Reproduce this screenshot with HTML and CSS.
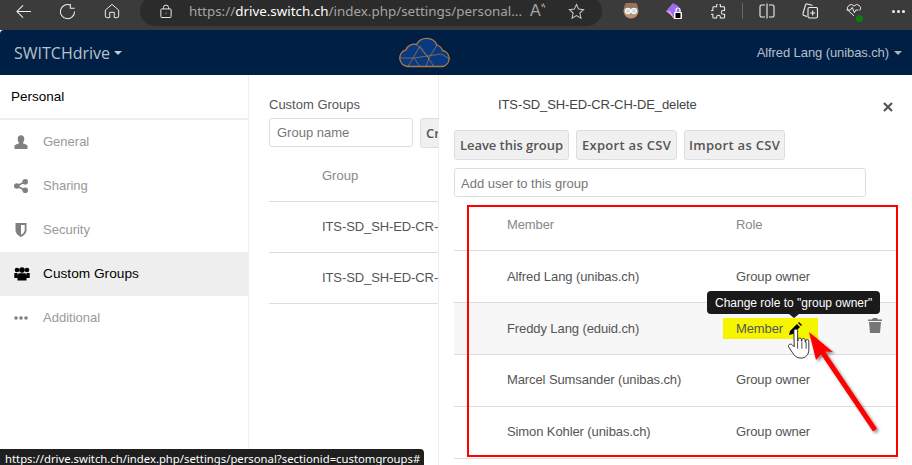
FILE: index.html
```html
<!DOCTYPE html>
<html lang="en">
<head>
<meta charset="utf-8">
<title>SWITCHdrive</title>
<link rel="stylesheet" href="styles.css">
</head>
<body>
<div class="browser">
  <svg class="bi bi-back" viewBox="0 0 18 16"><path d="M17 8H2M8.500 1.500 2 8l6.500 6.500"/></svg>
  <svg class="bi bi-reload" viewBox="0 0 18 18"><path d="M12 2.200A7.500 7.500 0 1 0 16.500 9M12 1v4.500h4.500" /></svg>
  <svg class="bi bi-home" viewBox="0 0 18 18"><path d="M1.500 8 9 1.500 16.500 8v6.500a2 2 0 0 1-2 2h-3v-6h-5v6h-3a2 2 0 0 1-2-2z"/></svg>
  <div class="addr">
    <svg class="bi bi-lock" viewBox="0 0 14 16"><path d="M4 5V3.500a3 3 0 0 1 6 0V5M2 5h10a1 1 0 0 1 1 1v8a1 1 0 0 1-1 1H2a1 1 0 0 1-1-1V6a1 1 0 0 1 1-1zM7 9.500v1"/></svg>
    <span class="url">https://<b>drive.switch.ch</b>/index.php/settings/personal...</span>
    <span class="aa">A</span>
    <svg class="bi bi-waves" viewBox="0 0 5 8"><path d="M.5 1.500 2 4M2 .5 4 4.500"/></svg>
    <svg class="bi bi-star" viewBox="0 0 18 18"><path d="m9 1.500 2.300 5 5.200.6-3.900 3.500 1.100 5.400L9 13.300 4.300 16l1.100-5.400L1.500 7.100l5.200-.6z"/></svg>
  </div>
  <div class="exts">
    <svg class="ext ext-face" viewBox="0 0 16 16"><circle cx="8" cy="8" r="7.500" fill="#c09070"/><path d="M1 5a7 7 0 0 1 14 0z" fill="#9a7458"/><circle cx="5" cy="8" r="2.800" fill="#c5e3ea" stroke="#fff"/><circle cx="11" cy="8" r="2.800" fill="#c5e3ea" stroke="#fff"/></svg>
    <svg class="ext ext-lock" viewBox="0 0 17 17"><path d="M0 8 7 0l5 3 3 5-6 8z" fill="#9a6cf0"/><path d="M0 8l4 3 4 5 1 0-5-8z" fill="#f0a0c8"/><rect x="8" y="9" width="8" height="7" rx="1" fill="#fff"/><rect x="9.500" y="10" width="5" height="5" fill="#000"/><path d="M10 9V7a2 2 0 0 1 4 0v2" fill="none" stroke="#fff" stroke-width="1.200"/></svg>
    <svg class="bi ext-puzzle" viewBox="0 0 16 16"><path d="M6 1.500a2 2 0 0 1 4 0V3h3.500a1 1 0 0 1 1 1v3H13a2 2 0 0 0 0 4h1.500v3a1 1 0 0 1-1 1H10v-1a2 2 0 0 0-4 0v1H3a1 1 0 0 1-1-1v-3H1a2 2 0 0 1 0-4h1V4a1 1 0 0 1 1-1h3z"/></svg>
    <span class="sep"></span>
    <svg class="bi ext-split" viewBox="0 0 16 16"><path d="M6 2H2.500a1.500 1.500 0 0 0-1.500 1.500v9A1.500 1.500 0 0 0 2.500 14H6M10 2h3.500A1.500 1.500 0 0 1 15 3.500v9a1.500 1.500 0 0 1-1.500 1.500H10M8 .5v15"/></svg>
    <svg class="bi ext-coll" viewBox="0 0 16 16"><path d="M5 13.500 2 12.500a1.500 1.500 0 0 1-1-2L3.500 2a1.500 1.500 0 0 1 2-1l5 1.500"/><rect x="6" y="4.500" width="9.500" height="10.500" rx="1.500"/><path d="M10.700 7.500v5M8.200 10h5"/></svg>
    <span class="ext-wrap">
      <svg class="bi ext-heart" viewBox="0 0 18 16"><path d="M9 14 2.500 8A3.800 3.800 0 0 1 9 3a3.800 3.800 0 0 1 6.500 5M.5 7.500h4.500L7 4.500l2.500 6 1.500-3h3"/></svg>
      <span class="green-dot"></span>
    </span>
    <span class="more"><i></i><i></i><i></i></span>
  </div>
</div>

<header class="nav">
  <div class="brand">SWITCHdrive<span class="caret"></span></div>
  <svg class="logo" viewBox="0 0 54 32">
    <path d="M10 30.500a8.500 8.500 0 0 1-2-16.700 9 9 0 0 1 10.500-5.300A11.500 11.500 0 0 1 39 9a8.500 8.500 0 0 1 5.500 5.500A8.200 8.200 0 0 1 45 30.500z" fill="#073a80" stroke="#b07a45" stroke-width="1.300"/>
    <path d="M10 30.500 22 10l14 20.500M18.500 8.500 31 22l8-13M2 22h14l27-4 9 5M16 22l6 8.500M31 22l-3 8.500" fill="none" stroke="#b07a45" stroke-width=".7"/>
  </svg>
  <div class="user">Alfred Lang (unibas.ch)<span class="caret small"></span></div>
</header>

<main class="main">
  <nav class="side">
    <div class="side-title">Personal</div>
    <a class="side-item" href="#"><svg class="si" viewBox="0 0 14 14"><path d="M7 .2c2 0 3.300 1.500 3.300 3.600S9.500 7 8.900 8c0 1 3.300 1 4.600 2.600V14H.5v-3.400C1.800 9 5.100 9 5.100 8 4.500 7 3.700 6 3.700 3.800S5 .2 7 .2z"/></svg>General</a>
    <a class="side-item" href="#"><svg class="si" viewBox="0 0 14 14"><circle cx="2.800" cy="7" r="2.800"/><circle cx="11.200" cy="2.800" r="2.800"/><circle cx="11.200" cy="11.200" r="2.800"/><path d="m2.800 7 8.400-4.200M2.800 7l8.400 4.200" stroke="#808080" stroke-width="1.800"/></svg>Sharing</a>
    <a class="side-item" href="#"><svg class="si" viewBox="0 0 14 14"><path fill-rule="evenodd" d="M1.500 0h11v7c0 3.500-2.500 5.500-5.500 7-3-1.500-5.500-3.500-5.500-7zM7 2v9.800c1.700-1 3.700-2.500 3.700-4.800V2z"/></svg>Security</a>
    <a class="side-item active" href="#"><svg class="si" viewBox="0 0 16 14"><circle cx="3" cy="3" r="2.300"/><circle cx="13" cy="3" r="2.300"/><circle cx="8" cy="3" r="2.800"/><path d="M.3 6h3l1 5H.3zM12.700 6h3v5h-4z"/><path d="M5 6.300h6c1 0 1.500 1 1.500 2V13.500h-9V8.300c0-1 .5-2 1.500-2z"/></svg>Custom Groups</a>
    <a class="side-item" href="#"><svg class="si" viewBox="0 0 14 14"><circle cx="2" cy="7" r="1.800"/><circle cx="7" cy="7" r="1.800"/><circle cx="12" cy="7" r="1.800"/></svg>Additional</a>
  </nav>

  <section class="content">
    <div class="content-title">Custom Groups</div>
    <div class="create">
      <div class="field group-name">Group name</div>
      <div class="btn create-btn">Create</div>
    </div>
    <div class="gt-head">Group</div>
    <div class="gt-row">ITS-SD_SH-ED-CR-CH-DE_delete</div>
    <div class="gt-row">ITS-SD_SH-ED-CR-CH-DE_test</div>
  </section>

  <aside class="panel">
    <div class="panel-top">
      <div class="panel-title">ITS-SD_SH-ED-CR-CH-DE_delete</div>
      <svg class="close" viewBox="0 0 10 10"><path d="m1 1 8 8M9 1 1 9"/></svg>
    </div>
    <div class="actions">
      <div class="btn leave">Leave this group</div>
      <div class="btn csv">Export as CSV</div>
      <div class="btn csv">Import as CSV</div>
    </div>
    <div class="field add-user">Add user to this group</div>
    <div class="members">
      <div class="m-row m-head"><span class="m-name">Member</span><span class="m-role">Role</span></div>
      <div class="m-row"><span class="m-name">Alfred Lang (unibas.ch)</span><span class="m-role">Group owner</span></div>
      <div class="m-row hover"><span class="m-name">Freddy Lang (eduid.ch)</span>
        <span class="m-role">
          <span class="marked">Member
            <svg class="pencil" viewBox="0 0 14 14"><path d="M1 13l1-4 7-7 3 3-7 7z"/><path d="m10 1 1-1 3 3-1 1z"/></svg>
          </span>
          <span class="tip">Change role to "group owner"</span>
        </span>
        <svg class="trash" viewBox="0 0 14 15"><path d="M5 0h4l1 1.500h4V3H0V1.500h4zM1 4h12l-1 11H2z"/></svg>
      </div>
      <div class="m-row lifted"><span class="m-name">Marcel Sumsander (unibas.ch)</span><span class="m-role">Group owner</span></div>
      <div class="m-row lifted"><span class="m-name">Simon Kohler (unibas.ch)</span><span class="m-role">Group owner</span></div>
    </div>
  </aside>
</main>

<div class="redbox"></div>
<svg class="arrow" viewBox="0 0 80 110">
  <defs><filter id="sh" x="-20%" y="-20%" width="150%" height="150%"><feDropShadow dx="2" dy="2" stdDeviation="1.500" flood-color="#000" flood-opacity=".45"/></filter></defs>
  <path filter="url(#sh)" fill="#fd0000" d="M0 0 24 20 16 19.600 68 96.600 64 99.400 12 22.400 7 28z"/>
</svg>
<svg class="hand" viewBox="0 0 26 34">
  <path d="M7 3a2 2 0 0 1 4 0v11h.500v-2a1.800 1.800 0 0 1 3.500 0v2h.500v-1.500a1.800 1.800 0 0 1 3.500 0V15h.500v-1a1.700 1.700 0 0 1 3.400 0v9c0 5-3 9-8.500 9-5 0-7-3-9-6l-4-6c-1-2 2-4 4-2l2 2z" fill="#fff" stroke="#111" stroke-width=".9"/>
  <path d="M11 15v7M15.500 15v7M20 15v7" stroke="#111" stroke-width=".8"/>
</svg>
<div class="status">https://drive.switch.ch/index.php/settings/personal?sectionid=customgroups#</div>
</body>
</html>
```

FILE: styles.css
```css
* { box-sizing: border-box; }
html, body { margin: 0; padding: 0; }
body {
  position: relative;
  width: 912px;
  height: 465px;
  overflow: hidden;
  display: flex;
  flex-direction: column;
  background: #fff;
  font-family: "Open Sans", "Liberation Sans", Arial, sans-serif;
  font-size: 13px;
  color: #555;
}

/* Browser chrome */
.browser {
  flex: 0 0 30px;
  height: 30px;
  display: flex;
  align-items: center;
  background: #3b3b3b;
  padding: 0 0 8px 15px;
  overflow: hidden;
}
.bi { fill: none; stroke: #f0f0f0; stroke-width: 1.100; flex: none; }
.bi-back { width: 17px; height: 15px; }
.bi-reload { width: 17px; height: 17px; margin-left: 27px; }
.bi-home { width: 16px; height: 16px; margin-left: 28px; }
.addr {
  margin-left: 20px;
  width: 462px;
  height: 30px;
  background: #2b2b2b;
  border-radius: 15px;
  display: flex;
  align-items: center;
  padding-left: 20px;
  flex: none;
  overflow: hidden;
}
.bi-lock { width: 12px; height: 15px; }
.url {
  margin-left: 17px;
  font-family: "Noto Sans", "Open Sans", sans-serif;
  font-size: 13.4px;
  color: #a5a5a5;
  white-space: nowrap;
  flex: none;
  width: 326px;
}
.url b { color: #fff; font-weight: 400; }
.aa { color: #a5a5a5; font-size: 16px; margin-left: 15px; font-family: "Liberation Sans", sans-serif; flex: none; }
.bi-waves { width: 5px; height: 8px; margin-top: -8px; stroke: #a5a5a5; }
.bi-star { width: 17px; height: 17px; margin-left: 22px; stroke: #c8c8c8; }
.exts { display: flex; align-items: center; margin-left: 21px; flex: none; }
.ext { flex: none; }
.ext-face { width: 16px; height: 16px; }
.ext-lock { width: 17px; height: 17px; margin-left: 27px; }
.ext-puzzle { width: 15px; height: 15px; margin-left: 28px; }
.sep { width: 1px; height: 16px; background: #666; margin-left: 16px; }
.ext-split { width: 16px; height: 16px; margin-left: 16px; }
.ext-coll { width: 16px; height: 16px; margin-left: 27px; }
.ext-wrap { position: relative; width: 18px; height: 16px; margin-left: 28px; display: flex; }
.ext-heart { width: 16px; height: 15px; }
.green-dot { position: absolute; right: 1px; bottom: -3px; width: 7px; height: 7px; background: #107c10; border-radius: 50%; }
.more { display: flex; gap: 2px; margin-left: 28px; }
.more i { width: 3px; height: 3px; border-radius: 50%; background: #f0f0f0; }

/* App nav */
.nav {
  flex: 0 0 45px;
  height: 45px;
  background: #001f44;
  display: flex;
  align-items: center;
  justify-content: space-between;
  position: relative;
  padding: 0 10px 0 14px;
  border-radius: 4px 0 0 0;
}
.brand { color: #b8c2ce; font-size: 16px; font-family: "Open Sans", sans-serif; display: flex; align-items: center; }
.caret { display: inline-block; margin-left: 4px; border-left: 4px solid transparent; border-right: 4px solid transparent; border-top: 4px solid #c0c8d2; }
.logo { position: absolute; left: 398px; top: 6px; width: 54px; height: 32px; }
.user { color: #b5bfca; font-family: "Liberation Sans", Arial, sans-serif; font-size: 13px; letter-spacing: -.09px; display: flex; align-items: center; }
.caret.small { margin-left: 5px; border-top-color: #aab4c0; }

/* Main */
.main { flex: 1; display: flex; min-height: 0; overflow: hidden; }
.side {
  flex: 0 0 249px;
  border-right: 1px solid #eee;
  font-family: "Liberation Sans", Arial, sans-serif;
}
.side-title {
  height: 45px;
  padding: 14px 0 0 11px;
  color: #000;
  font-size: 13.5px;
  border-bottom: 2px solid #eee;
  line-height: 15px;
}
.side-item {
  height: 44px;
  display: flex;
  align-items: center;
  padding: 0 0 2px 14px;
  color: #999;
  text-decoration: none;
  font-size: 13px;
}
.si { width: 14px; height: 14px; margin: 2px 15px 0 0; fill: #808080; flex: none; }
.side-item.active { background: #eee; color: #000; font-size: 13.7px; }
.side-item.active .si { fill: #000; width: 16px; margin-right: 13px; }

.content {
  flex: 0 0 189px;
  overflow: hidden;
  padding: 0 0 0 20px;
  font-family: "Liberation Sans", Arial, sans-serif;
}
.content-title { padding-top: 22px; height: 43px; font-size: 13px; line-height: 15px; color: #555; }
.create { display: flex; gap: 7px; width: 220px; }
.field {
  border: 1px solid #ddd;
  border-radius: 3px;
  color: #777;
  background: #fff;
  font-size: 13px;
  padding-left: 7px;
  display: flex;
  align-items: center;
}
.group-name { flex: 0 0 144px; height: 29px; }
.btn {
  height: 30px;
  background: #f0f0f0;
  border: 1px solid #ddd;
  border-radius: 3px;
  padding: 0 5px;
  display: flex;
  align-items: center;
  justify-content: center;
  font-family: "Open Sans", sans-serif;
  font-weight: 600;
  font-size: 13px;
  color: #555;
  flex: none;
}
.leave { width: 115px; padding: 0; letter-spacing: -.05px; }
.csv { width: 101px; padding: 0; letter-spacing: .3px; }
.gt-head { height: 54px; width: 400px; padding: 20px 0 0 53px; color: #888; font-size: 13px; line-height: 15px; border-bottom: 1px solid #ddd; }
.gt-row { height: 51px; width: 400px; white-space: nowrap; padding: 17px 0 0 53px; color: #555; font-size: 13px; line-height: 15px; border-bottom: 1px solid #ddd; letter-spacing: -.1px; }

/* Details panel */
.panel {
  flex: 1;
  min-width: 0;
  background: #fff;
  border-left: 1px solid #eee;
  padding-left: 15px;
  font-family: "Liberation Sans", Arial, sans-serif;
  font-size: 13px;
}
.panel-top { height: 55px; display: flex; padding-top: 22px; padding-left: 44px; line-height: 15px; color: #444; }
.panel-title { flex: none; font-size: 13px; letter-spacing: -.1px; }
.close { width: 10px; height: 10px; margin: 5px 0 0 186px; fill: none; stroke: #555; stroke-width: 2.200; flex: none; }
.actions { display: flex; gap: 7px; }
.add-user { width: 412px; height: 29px; margin-top: 8px; padding: 1px 0 0 6px; }
.members { margin-top: 2px; width: 443px; }
.m-row {
  height: 52px;
  display: flex;
  align-items: center;
  border-bottom: 1px solid #ddd;
  position: relative;
  color: #555;
  letter-spacing: -.1px;
}
.m-head { color: #888; }
.lifted { padding-bottom: 2px; }
.m-name { margin-left: 53px; width: 229px; white-space: nowrap; flex: none; }
.m-role { white-space: nowrap; flex: none; position: relative; }
.hover { background: #f7f7f7; }
.marked {
  display: flex;
  align-items: center;
  margin-left: -13px;
  padding-left: 13px;
  width: 95px;
  height: 21px;
  background: #f5f500;
  color: #555;
}
.pencil { width: 14px; height: 14px; fill: #000; margin-left: 5px; }
.tip {
  position: absolute;
  left: -29px;
  top: -27px;
  height: 23px;
  padding: 0 8px;
  background: #1a1a1a;
  color: #fff;
  border-radius: 4px;
  font-size: 12px;
  letter-spacing: 0;
  display: flex;
  align-items: center;
  white-space: nowrap;
}
.tip::after {
  content: "";
  position: absolute;
  left: 82px;
  bottom: -4px;
  border-left: 5px solid transparent;
  border-right: 5px solid transparent;
  border-top: 4px solid #1a1a1a;
}
.trash { position: absolute; left: 414px; top: 15px; width: 14px; height: 15px; fill: #777; }

/* Annotations over the screenshot */
.redbox {
  position: absolute;
  left: 467px;
  top: 205px;
  width: 431px;
  height: 252px;
  border: 2px solid #f00;
  pointer-events: none;
}
.arrow { position: absolute; left: 809px; top: 332px; width: 80px; height: 110px; overflow: visible; }
.hand { position: absolute; left: 787px; top: 328px; width: 25px; height: 32px; }
.status {
  position: absolute;
  left: 0;
  top: 449px;
  height: 22px;
  width: 424px;
  padding: 2px 0 0 5px;
  background: #1f1f1f;
  color: #fff;
  border-radius: 0 4px 0 0;
  font-family: "Noto Sans", sans-serif;
  font-size: 11.3px;
  white-space: nowrap;
  overflow: hidden;
}
```
